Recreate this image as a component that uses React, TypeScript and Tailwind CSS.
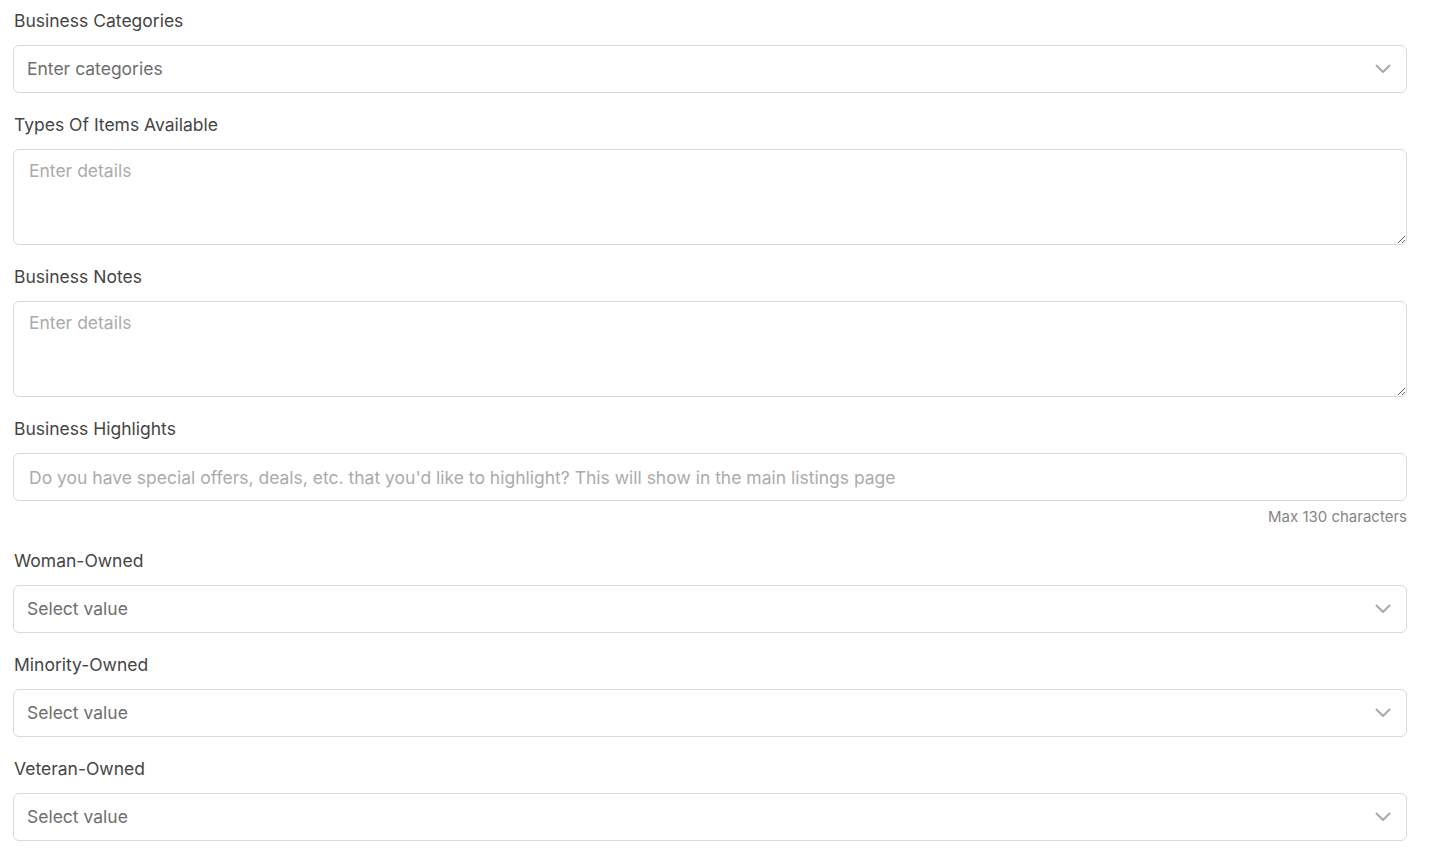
const Chevron = () => (
  <svg width="16" height="10" viewBox="0 0 16 10" fill="none" stroke="#a8a8a8" strokeWidth="2" strokeLinecap="round" strokeLinejoin="round">
    <path d="M1.5 1.5L8 8l6.5-6.5" />
  </svg>
)

const Label = ({ text }: { text: string }) => (
  <label className="block text-[17.5px] leading-6 text-[#454545] mb-3 pl-px">{text}</label>
)

const SelectBox = ({ placeholder }: { placeholder: string }) => (
  <div className="h-12 w-full border border-[#dadada] rounded-md bg-white flex items-center justify-between pl-[13px] pr-[15px]">
    <span className="text-[17.5px] text-[#6e6e6e] pt-px">{placeholder}</span>
    <Chevron />
  </div>
)

const TextArea = () => (
  <textarea
    placeholder="Enter details"
    className="block w-full h-24 border border-[#dadada] rounded-md px-[15px] pt-[9px] pb-2 text-[17.5px] leading-6 text-[#454545] placeholder:text-[#ababab] outline-none"
  />
)

const App = () => {
  return (
    <div className="min-h-screen bg-white px-[13px] pt-[9px] pb-4 font-['Inter',_'Noto_Sans',_sans-serif] w-[1420px]">
      <div className="flex flex-col gap-5">
        <div>
          <Label text="Business Categories" />
          <SelectBox placeholder="Enter categories" />
        </div>
        <div>
          <Label text="Types Of Items Available" />
          <TextArea />
        </div>
        <div>
          <Label text="Business Notes" />
          <TextArea />
        </div>
        <div>
          <Label text="Business Highlights" />
          <input
            placeholder="Do you have special offers, deals, etc. that you'd like to highlight? This will show in the main listings page"
            className="block w-full h-12 border border-[#dadada] rounded-md px-[15px] text-[17.5px] placeholder:text-[#ababab] outline-none"
          />
          <p className="text-right text-[15px] leading-5 text-[#858585] mt-1.5 pb-[2px]">Max 130 characters</p>
        </div>
        <div>
          <Label text="Woman-Owned" />
          <SelectBox placeholder="Select value" />
        </div>
        <div>
          <Label text="Minority-Owned" />
          <SelectBox placeholder="Select value" />
        </div>
        <div>
          <Label text="Veteran-Owned" />
          <SelectBox placeholder="Select value" />
        </div>
      </div>
    </div>
  )
}

export default App
